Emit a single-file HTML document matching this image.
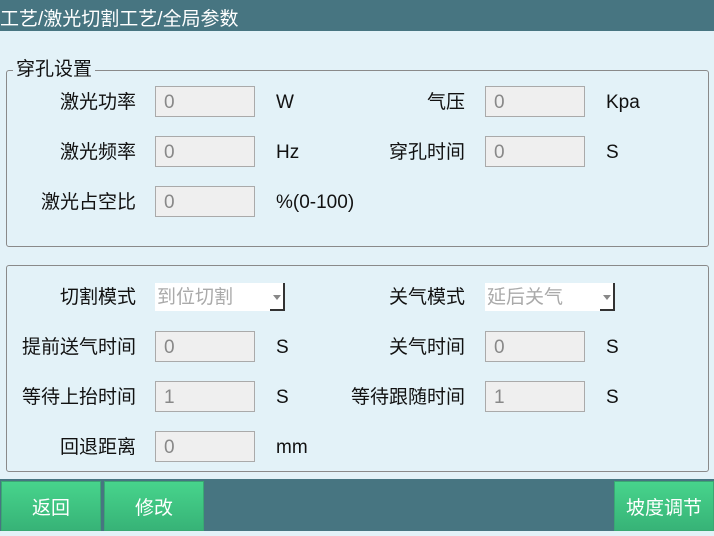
<!DOCTYPE html>
<html><head><meta charset="utf-8"><style>
*{margin:0;padding:0;box-sizing:border-box}
body{width:714px;height:531px;background:#e3f2f8;position:relative;overflow:hidden;font-family:"Liberation Sans","Noto Sans CJK SC",sans-serif;color:#111}
.hdr{position:absolute;left:0;top:0;width:714px;height:31px;background:#477581;color:#fff;font-size:19px;line-height:40px;padding-left:0;overflow:hidden}
.grp{position:absolute;left:6px;width:703px;border:1px solid #8a8a8a;border-radius:3px}
.leg{position:absolute;left:13px;top:58px;background:#e3f2f8;padding:0 3px;font-size:19px;line-height:24px}
.lbl{position:absolute;font-size:19px;line-height:22px;text-align:right;width:140px}
.unit{position:absolute;font-size:19px;line-height:22px}
.inp{position:absolute;width:100px;height:31px;background:#efefef;border:1px solid #aaa;color:#888;font-size:19px;line-height:31px;padding-left:8px}
.sel{position:absolute;width:130px;height:28px;background:#fff;color:#aaa;font-size:19px;line-height:30px;padding-left:2px}
.sel .ar{position:absolute;right:0;top:0;width:15px;height:28px;border-right:2px solid #333;border-bottom:2px solid #333}
.sel .ar:after{content:"";position:absolute;left:3px;top:12px;border:4px solid transparent;border-top:5px solid #888}
.bar{position:absolute;left:0;top:479px;width:714px;height:52px;background:#477581}
.btn{position:absolute;top:481px;height:50px;background:linear-gradient(#47d48c,#37b377);color:#fff;font-size:19px;line-height:54px;text-align:center;border:1px solid #3aa873}
</style></head><body>
<div class="hdr">工艺/激光切割工艺/全局参数</div>
<div class="grp" style="top:70px;height:177px"></div>
<div class="leg">穿孔设置</div>
<div class="grp" style="top:265px;height:207px"></div>

<div class="lbl" style="left:-4px;top:92px">激光功率</div><div class="inp" style="left:155px;top:86px">0</div><div class="unit" style="left:276px;top:92px">W</div>
<div class="lbl" style="left:325px;top:92px">气压</div><div class="inp" style="left:485px;top:86px">0</div><div class="unit" style="left:606px;top:92px">Kpa</div>
<div class="lbl" style="left:-4px;top:142px">激光频率</div><div class="inp" style="left:155px;top:136px">0</div><div class="unit" style="left:276px;top:142px">Hz</div>
<div class="lbl" style="left:325px;top:142px">穿孔时间</div><div class="inp" style="left:485px;top:136px">0</div><div class="unit" style="left:606px;top:142px">S</div>
<div class="lbl" style="left:-4px;top:192px">激光占空比</div><div class="inp" style="left:155px;top:186px">0</div><div class="unit" style="left:276px;top:192px">%(0-100)</div>

<div class="lbl" style="left:-4px;top:287px">切割模式</div><div class="sel" style="left:155px;top:283px">到位切割<span class="ar"></span></div>
<div class="lbl" style="left:325px;top:287px">关气模式</div><div class="sel" style="left:485px;top:283px">延后关气<span class="ar"></span></div>
<div class="lbl" style="left:-4px;top:337px">提前送气时间</div><div class="inp" style="left:155px;top:331px">0</div><div class="unit" style="left:276px;top:337px">S</div>
<div class="lbl" style="left:325px;top:337px">关气时间</div><div class="inp" style="left:485px;top:331px">0</div><div class="unit" style="left:606px;top:337px">S</div>
<div class="lbl" style="left:-4px;top:387px">等待上抬时间</div><div class="inp" style="left:155px;top:381px">1</div><div class="unit" style="left:276px;top:387px">S</div>
<div class="lbl" style="left:325px;top:387px">等待跟随时间</div><div class="inp" style="left:485px;top:381px">1</div><div class="unit" style="left:606px;top:387px">S</div>
<div class="lbl" style="left:-4px;top:437px">回退距离</div><div class="inp" style="left:155px;top:431px">0</div><div class="unit" style="left:276px;top:437px">mm</div>

<div class="bar"></div>
<div class="btn" style="left:1px;width:100px">返回</div>
<div class="btn" style="left:104px;width:100px">修改</div>
<div class="btn" style="left:614px;width:100px">坡度调节</div>
</body></html>
